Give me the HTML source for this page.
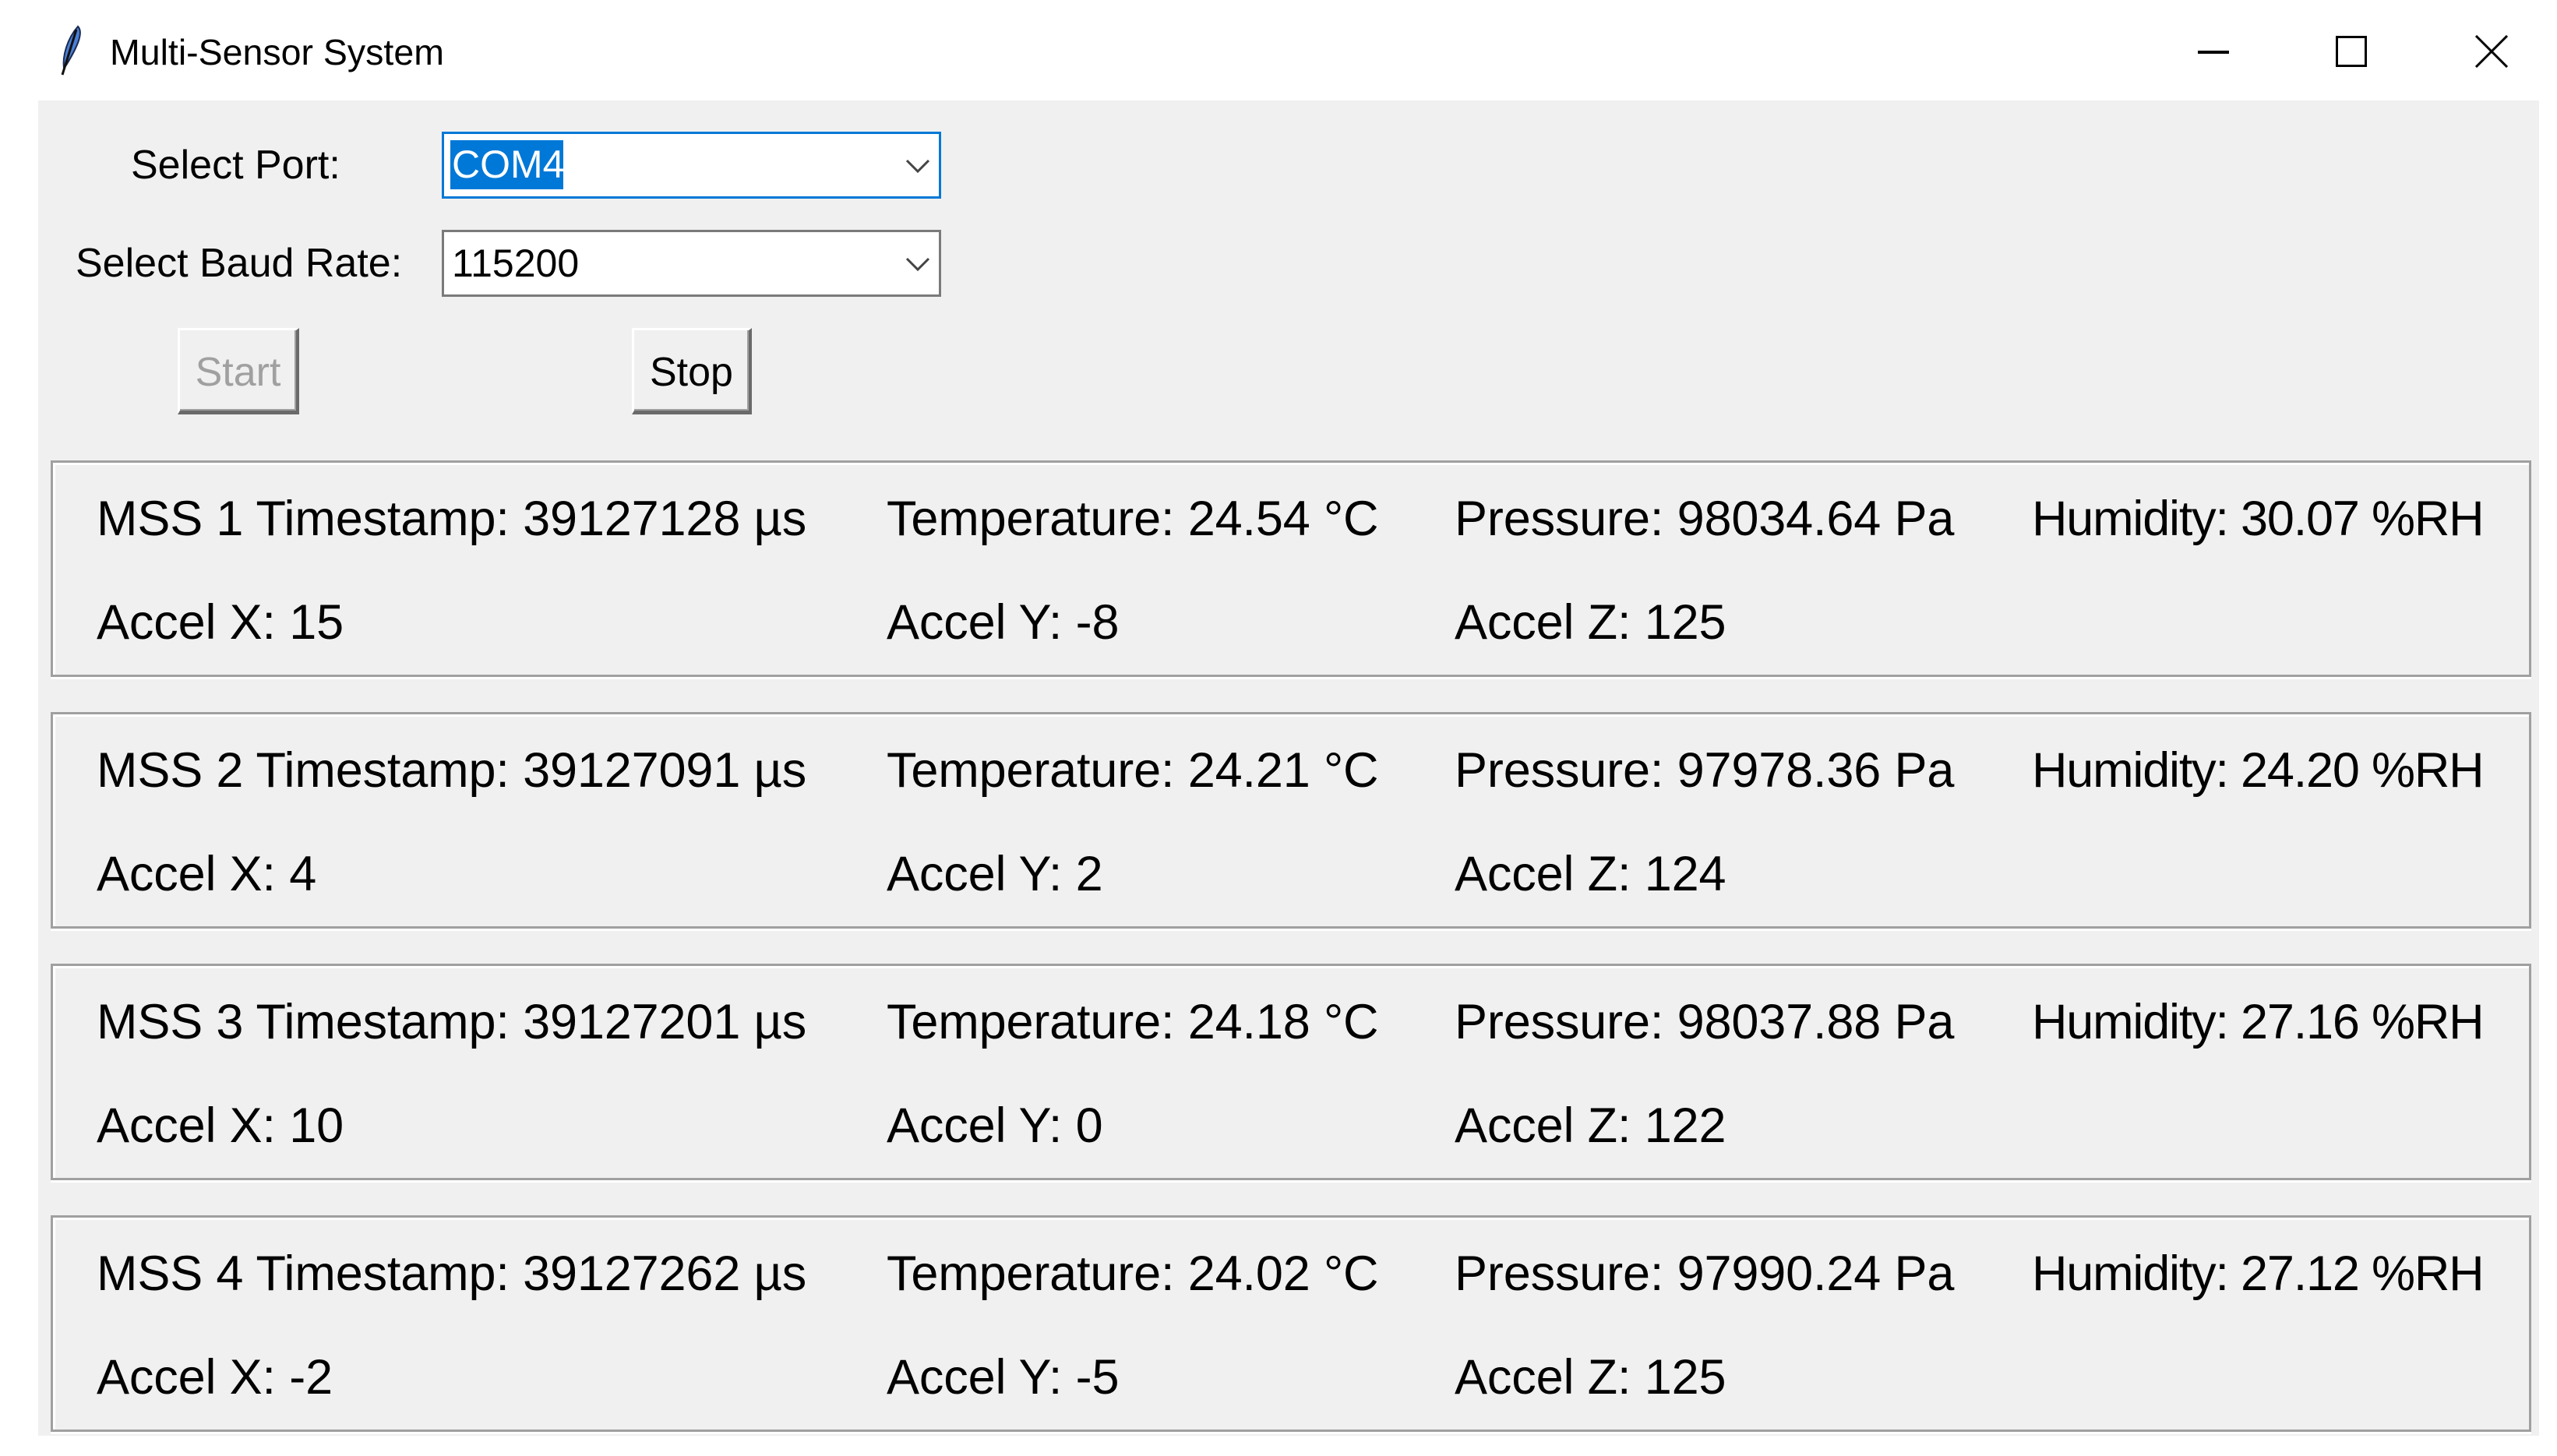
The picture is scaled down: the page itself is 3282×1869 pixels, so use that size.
<!DOCTYPE html>
<html><head><meta charset="utf-8"><style>
*{margin:0;padding:0;box-sizing:border-box}
body{width:3282px;height:1869px;background:#fff;position:relative;overflow:hidden;font-family:"Liberation Sans",Arial,sans-serif;color:#000}
.a{position:absolute;white-space:nowrap}
#win{position:absolute;left:49px;top:129px;width:3210px;height:1714px;background:#f0f0f0}
.panel{position:absolute;left:65px;width:3184px;height:278px;border:3px solid #a0a0a0;box-shadow:inset 3px 3px 0 #fff,0 3px 0 #fff}
.t{position:absolute;font-size:63px;line-height:1;white-space:nowrap;letter-spacing:-0.15px}
.h{letter-spacing:-1.2px}
.lbl{font-size:52px;line-height:1}
.combo{position:absolute;left:567px;width:641px;height:86px;background:#fff}
.btn{position:absolute;top:421px;height:111px;background:#f0f0f0;border-top:3px solid #fff;border-left:3px solid #fff;border-right:4px solid #6a6a6a;border-bottom:5px solid #6a6a6a;box-shadow:inset -2px -2px 0 #a0a0a0;font-size:52px;text-align:center;line-height:108px}
</style></head><body>
<svg class="a" style="left:70px;top:32px" width="40" height="68" viewBox="0 0 40 68"><path d="M30 2 C38 10 28 30 16 50 L12 56 C10 40 16 18 30 2Z" fill="#4a7fd6" stroke="#1a2a50" stroke-width="2"/><path d="M28 6 L10 64" stroke="#111" stroke-width="3"/></svg>
<div class="a" style="left:141px;top:44px;font-size:46.5px;line-height:1">Multi-Sensor System</div>
<div class="a" style="left:2821px;top:65px;width:40px;height:4px;background:#000"></div>
<div class="a" style="left:2998px;top:46px;width:40px;height:40px;border:3px solid #000"></div>
<svg class="a" style="left:3176px;top:45px" width="44" height="42"><path d="M2 1 L42 41 M42 1 L2 41" stroke="#000" stroke-width="3"/></svg>
<div id="win"></div>
<div class="a lbl" style="left:168px;top:186px">Select Port:</div>
<div class="a lbl" style="left:97px;top:312px">Select Baud Rate:</div>
<div class="combo" style="top:169px;border:3px solid #0078d7"><div class="a" style="left:8px;top:8px;width:145px;height:63px;background:#0078d7"></div><div class="a" style="left:10px;top:14px;color:#fff;font-size:50px;line-height:1">COM4</div>
<svg class="a" style="left:592px;top:32px" width="32" height="18"><path d="M2 2 L16 16 L30 2" fill="none" stroke="#444" stroke-width="3"/></svg></div>
<div class="combo" style="top:295px;border:3px solid #7a7a7a"><div class="a" style="left:10px;top:15px;font-size:50px;line-height:1">115200</div>
<svg class="a" style="left:592px;top:32px" width="32" height="18"><path d="M2 2 L16 16 L30 2" fill="none" stroke="#444" stroke-width="3"/></svg></div>
<div class="btn" style="left:228px;width:156px;color:#a0a0a0">Start</div>
<div class="btn" style="left:811px;width:154px">Stop</div>

<div class="panel" style="top:591px"></div>
<div class="panel" style="top:914px"></div>
<div class="panel" style="top:1237px"></div>
<div class="panel" style="top:1560px"></div>

<div class="t" style="left:124px;top:635px">MSS 1 Timestamp: 39127128 µs</div>
<div class="t" style="left:1138px;top:635px">Temperature: 24.54 °C</div>
<div class="t" style="left:1867px;top:635px">Pressure: 98034.64 Pa</div>
<div class="t h" style="left:2608px;top:635px">Humidity: 30.07 %RH</div>
<div class="t" style="left:124px;top:768px">Accel X: 15</div>
<div class="t" style="left:1138px;top:768px">Accel Y: -8</div>
<div class="t" style="left:1867px;top:768px">Accel Z: 125</div>

<div class="t" style="left:124px;top:958px">MSS 2 Timestamp: 39127091 µs</div>
<div class="t" style="left:1138px;top:958px">Temperature: 24.21 °C</div>
<div class="t" style="left:1867px;top:958px">Pressure: 97978.36 Pa</div>
<div class="t h" style="left:2608px;top:958px">Humidity: 24.20 %RH</div>
<div class="t" style="left:124px;top:1091px">Accel X: 4</div>
<div class="t" style="left:1138px;top:1091px">Accel Y: 2</div>
<div class="t" style="left:1867px;top:1091px">Accel Z: 124</div>

<div class="t" style="left:124px;top:1281px">MSS 3 Timestamp: 39127201 µs</div>
<div class="t" style="left:1138px;top:1281px">Temperature: 24.18 °C</div>
<div class="t" style="left:1867px;top:1281px">Pressure: 98037.88 Pa</div>
<div class="t h" style="left:2608px;top:1281px">Humidity: 27.16 %RH</div>
<div class="t" style="left:124px;top:1414px">Accel X: 10</div>
<div class="t" style="left:1138px;top:1414px">Accel Y: 0</div>
<div class="t" style="left:1867px;top:1414px">Accel Z: 122</div>

<div class="t" style="left:124px;top:1604px">MSS 4 Timestamp: 39127262 µs</div>
<div class="t" style="left:1138px;top:1604px">Temperature: 24.02 °C</div>
<div class="t" style="left:1867px;top:1604px">Pressure: 97990.24 Pa</div>
<div class="t h" style="left:2608px;top:1604px">Humidity: 27.12 %RH</div>
<div class="t" style="left:124px;top:1737px">Accel X: -2</div>
<div class="t" style="left:1138px;top:1737px">Accel Y: -5</div>
<div class="t" style="left:1867px;top:1737px">Accel Z: 125</div>
</body></html>
